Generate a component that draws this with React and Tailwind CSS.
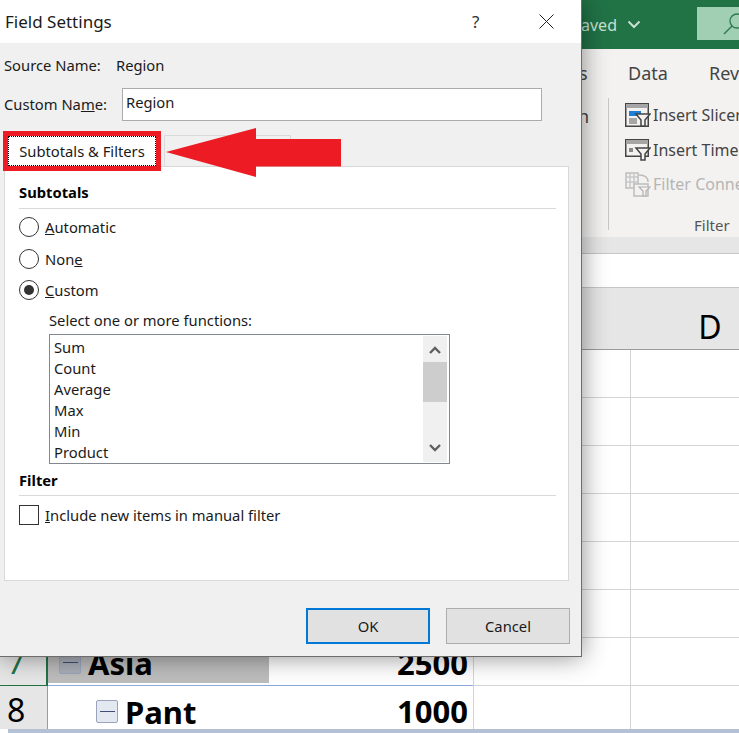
import React from "react";

const font = { fontFamily: '"Noto Sans", "Open Sans", sans-serif' };

function Radio({ checked }) {
  return (
    <span className="flex h-5 w-5 shrink-0 items-center justify-center rounded-full border border-[#333333] bg-white">
      {checked && <span className="h-[10px] w-[10px] rounded-full bg-[#333333]"></span>}
    </span>
  );
}

function RadioRow({ checked, className, children }) {
  return (
    <div className={"flex h-8 items-center gap-[6px] " + className}>
      <Radio checked={checked} />
      <span>{children}</span>
    </div>
  );
}

function SlicerIcon() {
  return (
    <svg width="26" height="24" viewBox="0 0 26 24" className="shrink-0">
      <rect x="0.75" y="0.75" width="22.5" height="22.5" fill="#f3f2f1" stroke="#444" strokeWidth="1.5" />
      <rect x="1" y="1" width="22" height="4" fill="#a6a6a6" />
      <rect x="4" y="8" width="12" height="5" fill="#1e7fd6" />
      <rect x="4" y="15" width="8" height="6" fill="#a6a6a6" />
      <path d="M11 11h14l-5 6v6h-4v-6z" fill="#f3f2f1" stroke="#444" strokeWidth="1.5" />
    </svg>
  );
}

function TimelineIcon() {
  return (
    <svg width="26" height="22" viewBox="0 0 26 22" className="shrink-0">
      <rect x="0.75" y="0.75" width="22.5" height="16.5" fill="#f3f2f1" stroke="#444" strokeWidth="1.5" />
      <rect x="1" y="1" width="22" height="4" fill="#a6a6a6" />
      <rect x="4" y="9" width="4" height="4" fill="#888" />
      <path d="M11 9h14l-5 6v6h-4v-6z" fill="#f3f2f1" stroke="#444" strokeWidth="1.5" />
    </svg>
  );
}

function ConnIcon() {
  return (
    <svg width="26" height="25" viewBox="0 0 26 25" className="shrink-0">
      <path d="M1 1h12v15H1z" fill="#f3f2f1" stroke="#bdbdbd" strokeWidth="1.5" />
      <path d="M1 5h12M5 1v15M9 1v15M1 10h12" stroke="#c8c8c8" strokeWidth="1.5" />
      <path d="M14 3c6 0 9 3 9 7" fill="none" stroke="#bdbdbd" strokeWidth="1.5" />
      <rect x="9" y="12" width="14" height="12" fill="#f3f2f1" stroke="#bdbdbd" strokeWidth="1.5" />
      <path d="M14 15h11l-4 4v5h-3v-5z" fill="#f3f2f1" stroke="#b0b0b0" strokeWidth="1.2" />
    </svg>
  );
}

function MinusBox({ className }) {
  return (
    <span className={"flex h-[23px] w-[22px] shrink-0 items-center justify-center rounded-[2px] border border-[#9aa5bd] " + className}>
      <span className="h-px w-[15px] bg-[#3f4f72]"></span>
    </span>
  );
}

function Backdrop() {
  const blank = [1, 2, 3, 4, 5, 6];
  return (
    <div className="flex h-[733px] w-[739px] flex-col overflow-hidden bg-white">
      <div className="flex h-[49px] shrink-0 items-center bg-[#217346] text-[16px] text-[#c9e0d2]">
        <span className="ml-[581px] w-[46px] shrink-0">aved</span>
        <svg width="14" height="10" viewBox="0 0 14 10" className="shrink-0">
          <path d="M1.500 1.500l5.500 5.500 5.500-5.500" fill="none" stroke="#c9e0d2" strokeWidth="2" />
        </svg>
        <div className="ml-[56px] mb-[3px] flex h-[33px] flex-1 justify-end overflow-hidden bg-[#a0cfb3]">
          <svg width="16" height="24" viewBox="0 0 16 24" className="mt-[5px] shrink-0">
            <circle cx="14" cy="9" r="7" fill="none" stroke="#2f7a50" strokeWidth="1.3" />
            <path d="M9 14L1 22" stroke="#2f7a50" strokeWidth="1.5" />
          </svg>
        </div>
      </div>
      <div className="flex h-[188px] shrink-0 flex-col bg-[#f3f2f1] text-[#444444]">
        <div className="flex h-[49px] shrink-0 items-center whitespace-nowrap text-[18px]">
          <span className="ml-[579px] w-[49px] shrink-0">s</span>
          <span className="w-[81px] shrink-0">Data</span>
          <span>Review</span>
        </div>
        <div className="flex h-[139px] shrink-0">
          <div className="w-[578px] shrink-0"></div>
          <div className="w-[30px] shrink-0 text-[18px] leading-[36px]">n</div>
          <div className="mb-[7px] mr-[16px] w-px bg-[#c8c6c4]"></div>
          <div className="flex flex-1 flex-col overflow-hidden whitespace-nowrap text-[16px]">
            <div className="flex h-[34px] shrink-0 items-center gap-[2px]"><SlicerIcon />Insert Slicer</div>
            <div className="mt-px flex h-[34px] shrink-0 items-center gap-[2px]"><TimelineIcon />Insert Timeline</div>
            <div className="flex h-[34px] shrink-0 items-center gap-[2px] text-[#b5b5b5]"><ConnIcon />Filter Connections</div>
            <div className="ml-[69px] mt-[13px] text-[15px] text-[#555555]">Filter</div>
          </div>
        </div>
      </div>
      <div className="h-[17px] shrink-0 border-b border-[#c6c6c6] bg-[#e6e6e6]"></div>
      <div className="h-[34px] shrink-0 border-b border-[#c6c6c6] bg-white"></div>
      <div className="flex h-[62px] shrink-0 border-b border-[#9b9b9b] bg-[#e6e6e6]">
        <div className="w-[630px] shrink-0"></div>
        <div className="mt-[15px] w-px bg-[#b5b5b5]"></div>
        <div className="w-[160px] shrink-0 pt-[17px] text-center text-[32px] leading-[44px] text-black">D</div>
      </div>
      {blank.map((n) => (
        <div key={n} className="flex h-[48px] shrink-0 border-b border-[#d4d4d4]">
          <div className="w-[630px] shrink-0"></div>
          <div className="w-px bg-[#d4d4d4]"></div>
        </div>
      ))}
      <div className="flex h-[48px] shrink-0 text-[31px] font-bold leading-[48px] text-black">
        <div className="w-[48px] shrink-0 border-r-2 border-b border-[#217346] bg-[#e6e6e6] pl-[7px] font-normal text-[#217346]">7</div>
        <div className="flex h-[48px] w-[425px] shrink-0 justify-between border-b border-[#8ea9db]">
          <div className="flex h-[46px] w-[222px] items-center border-r border-b border-white bg-[#bdbdbd] pl-[11px] pt-[4px]">
            <MinusBox className="bg-[#a9aeb8]" />
            <span className="ml-[7px]">Asia</span>
          </div>
          <span className="pr-[5px] pt-px">2500</span>
        </div>
        <div className="w-[157px] shrink-0 border-l border-b border-[#d4d4d4]"></div>
        <div className="flex-1 border-l border-b border-[#d4d4d4]"></div>
      </div>
      <div className="flex h-[43px] shrink-0 text-[31px] font-bold leading-[48px] text-black">
        <div className="w-[48px] shrink-0 border-r border-[#9b9b9b] bg-[#e6e6e6] pl-[7px] text-[32px] font-normal">8</div>
        <div className="flex w-[425px] shrink-0 justify-between">
          <div className="flex h-[48px] items-center pl-[48px] pt-[3px]">
            <MinusBox className="bg-[#e4e8f0]" />
            <span className="ml-[7px]">Pant</span>
          </div>
          <span className="pr-[5px] pt-px">1000</span>
        </div>
        <div className="w-[157px] shrink-0 border-l border-[#d4d4d4]"></div>
        <div className="flex-1 border-l border-[#d4d4d4]"></div>
      </div>
      <div className="ml-[8px] h-[4px] shrink-0 bg-[#b4c0d4]"></div>
    </div>
  );
}

function Dialog() {
  const items = ["Sum", "Count", "Average", "Max", "Min", "Product"];
  return (
    <div className="absolute left-0 top-0 flex h-[657px] w-[582px] flex-col border-r border-b border-[#6d6d6d] bg-[#f0f0f0] text-[14.75px] text-[#1a1a1a] shadow-[0_0_24px_rgba(0,0,0,0.45)]">
      <div className="flex h-[43px] shrink-0 items-center bg-white pl-[5px] text-[17px]">
        <span className="w-[106px] whitespace-nowrap">Field Settings</span>
        <span className="ml-[361px] text-[17px] text-[#333333]">?</span>
        <svg width="15" height="15" viewBox="0 0 15 15" className="ml-[60px]">
          <path d="M0.5 0.5l14 14M14.500 0.500l-14 14" stroke="#222" strokeWidth="1" />
        </svg>
      </div>
      <div className="mb-px flex h-[44px] shrink-0 items-center pl-[4px]">
        <span className="w-[112px]">Source Name:</span>
        <span>Region</span>
      </div>
      <div className="flex h-[33px] shrink-0 items-center pl-[4px]">
        <span className="w-[118px]">Custom Na<u>m</u>e:</span>
        <div className="flex h-[33px] w-[420px] items-start border border-[#ababab] bg-white pl-[3px] pt-[2px]">Region</div>
      </div>
      <div className="relative z-10 -mb-[5px] flex h-[50px] shrink-0 items-end pl-[3px]">
        <div className="flex h-[40px] w-[158px] shrink-0 border-[5px] border-[#ed1c24] bg-white">
          <div className="flex flex-1 items-center justify-center whitespace-nowrap border border-dotted border-black">Subtotals &amp; Filters</div>
        </div>
        <div className="mb-[5px] ml-[3px] h-[31px] w-[127px] border border-b-0 border-[#d9d9d9]"></div>
      </div>
      <div className="ml-[4px] flex h-[415px] w-[565px] shrink-0 flex-col border border-[#d9d9d9] bg-white pl-[14px]">
        <div className="h-[42px] w-[537px] shrink-0 border-b border-[#d9d9d9] pt-[14px] font-bold text-black">Subtotals</div>
        <RadioRow checked={false} className="mt-[2px]"><u>A</u>utomatic</RadioRow>
        <RadioRow checked={false} className="">Non<u>e</u></RadioRow>
        <RadioRow checked={true} className="-mt-px"><u>C</u>ustom</RadioRow>
        <div className="flex h-[28px] shrink-0 items-center pl-[30px]">Select one or more functions:</div>
        <div className="ml-[30px] flex h-[130px] w-[401px] shrink-0 border border-[#828790]">
          <div className="flex-1 pl-[4px] pt-[2px]">
            {items.map((it) => (
              <div key={it} className="h-[21px] leading-[21px]">{it}</div>
            ))}
          </div>
          <div className="my-px mr-[2px] flex w-[24px] flex-col items-center bg-[#f0f0f0]">
            <svg width="14" height="26" viewBox="0 0 14 26" className="shrink-0">
              <path d="M2 17l5-5 5 5" fill="none" stroke="#606060" strokeWidth="2.4" />
            </svg>
            <div className="h-[40px] w-full shrink-0 bg-[#cdcdcd]"></div>
            <svg width="14" height="60" viewBox="0 0 14 60" className="shrink-0">
              <path d="M2 43l5 5 5-5" fill="none" stroke="#606060" strokeWidth="2.4" />
            </svg>
          </div>
        </div>
        <div className="h-[32px] w-[537px] shrink-0 border-b border-[#d9d9d9] pt-[5px] font-bold text-black">Filter</div>
        <div className="flex h-[38px] shrink-0 items-center gap-[6px]">
          <span className="h-5 w-5 shrink-0 border border-[#333333] bg-white"></span>
          <span><u>I</u>nclude new items in manual filter</span>
        </div>
      </div>
      <div className="mt-[27px] flex shrink-0 justify-end gap-[16px] pr-[11px]">
        <div className="flex h-[36px] w-[124px] items-center justify-center border-2 border-[#0078d7] bg-[#e1e1e1]">OK</div>
        <div className="flex h-[36px] w-[124px] items-center justify-center border border-[#adadad] bg-[#e1e1e1]">Cancel</div>
      </div>
      <svg width="176" height="52" viewBox="0 0 176 52" className="absolute left-[166px] top-[127px] z-20">
        <path d="M0 25L90 1V12H175V39.500H90V50Z" fill="#ed1c24" />
      </svg>
    </div>
  );
}

export default function App() {
  return (
    <div className="relative h-[733px] w-[739px] overflow-hidden" style={font}>
      <Backdrop />
      <Dialog />
    </div>
  );
}
